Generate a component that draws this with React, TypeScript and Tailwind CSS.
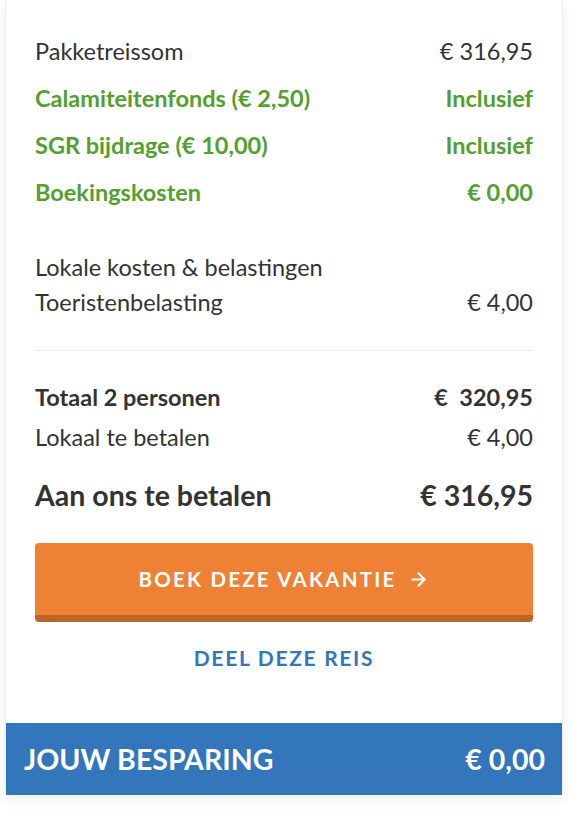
import React from "react";
import { ArrowRight } from "lucide-react";

type Line = { label: string; value?: string; tone?: "green" | "dark" };

const priceLines: Line[] = [
    { label: "Pakketreissom", value: "€ 316,95" },
    { label: "Calamiteitenfonds (€ 2,50)", value: "Inclusief", tone: "green" },
    { label: "SGR bijdrage (€ 10,00)", value: "Inclusief", tone: "green" },
    { label: "Boekingskosten", value: "€ 0,00", tone: "green" },
];

function PriceRow({ label, value, tone }: Line) {
    const color = tone === "green" ? "text-[#52a02e] font-bold" : "text-[#333333]";
    return (
        <div className={`flex h-[47px] items-center justify-between pt-px text-[23.5px] ${color}`}>
            <span>{label}</span>
            <span>{value}</span>
        </div>
    );
}

export default function App() {
    return (
        <div className="min-h-screen bg-white font-['Lato','Liberation_Sans',sans-serif]">
            <div className="ml-[5px] w-[558px] border-x border-[#ececec] bg-white shadow-[0_6px_14px_rgba(0,0,0,0.06)]">
                {/* Price breakdown */}
                <div className="px-[29px] pt-[28px]">
                    {priceLines.map((line) => (
                        <PriceRow key={line.label} {...line} />
                    ))}

                    {/* Local costs */}
                    <div className="mt-[34px] text-[23.5px] text-[#333333]">
                        <div className="flex h-[35px] items-center">Lokale kosten &amp; belastingen</div>
                        <div className="flex h-[35px] items-center justify-between">
                            <span>Toeristenbelasting</span>
                            <span>€ 4,00</span>
                        </div>
                    </div>

                    <div className="mt-[30px] h-px bg-[#ebebeb]" />

                    {/* Totals */}
                    <div className="mt-[27px] text-[#333333]">
                        <div className="flex h-[40px] items-center justify-between text-[23.5px] font-bold">
                            <span>Totaal 2 personen</span>
                            <span>€&nbsp; 320,95</span>
                        </div>
                        <div className="flex h-[40px] items-center justify-between text-[23.5px]">
                            <span>Lokaal te betalen</span>
                            <span>€ 4,00</span>
                        </div>
                        <div className="mt-[12px] flex h-[50px] items-center justify-between text-[28.5px] font-bold">
                            <span>Aan ons te betalen</span>
                            <span>€ 316,95</span>
                        </div>
                    </div>

                    {/* Actions */}
                    <button className="mt-[23px] flex h-[79px] w-full items-center justify-center gap-3 rounded-[4px] border-b-[7px] border-[#c0652a] bg-[#ee8133] text-[20.5px] font-bold tracking-[2.2px] text-white">
                        BOEK DEZE VAKANTIE
                        <ArrowRight size={21} strokeWidth={2.5} />
                    </button>
                    <div className="mt-[21px] flex h-[30px] items-center justify-center text-[21px] font-bold tracking-[1.7px] text-[#3376bb]">
                        DEEL DEZE REIS
                    </div>
                </div>

                {/* Savings bar */}
                <div className="mt-[50px] flex h-[72px] items-center justify-between bg-[#3376bb] pl-[18px] pr-[17px] text-[28.5px] font-bold text-white">
                    <span>JOUW BESPARING</span>
                    <span>€ 0,00</span>
                </div>
            </div>
        </div>
    );
}
